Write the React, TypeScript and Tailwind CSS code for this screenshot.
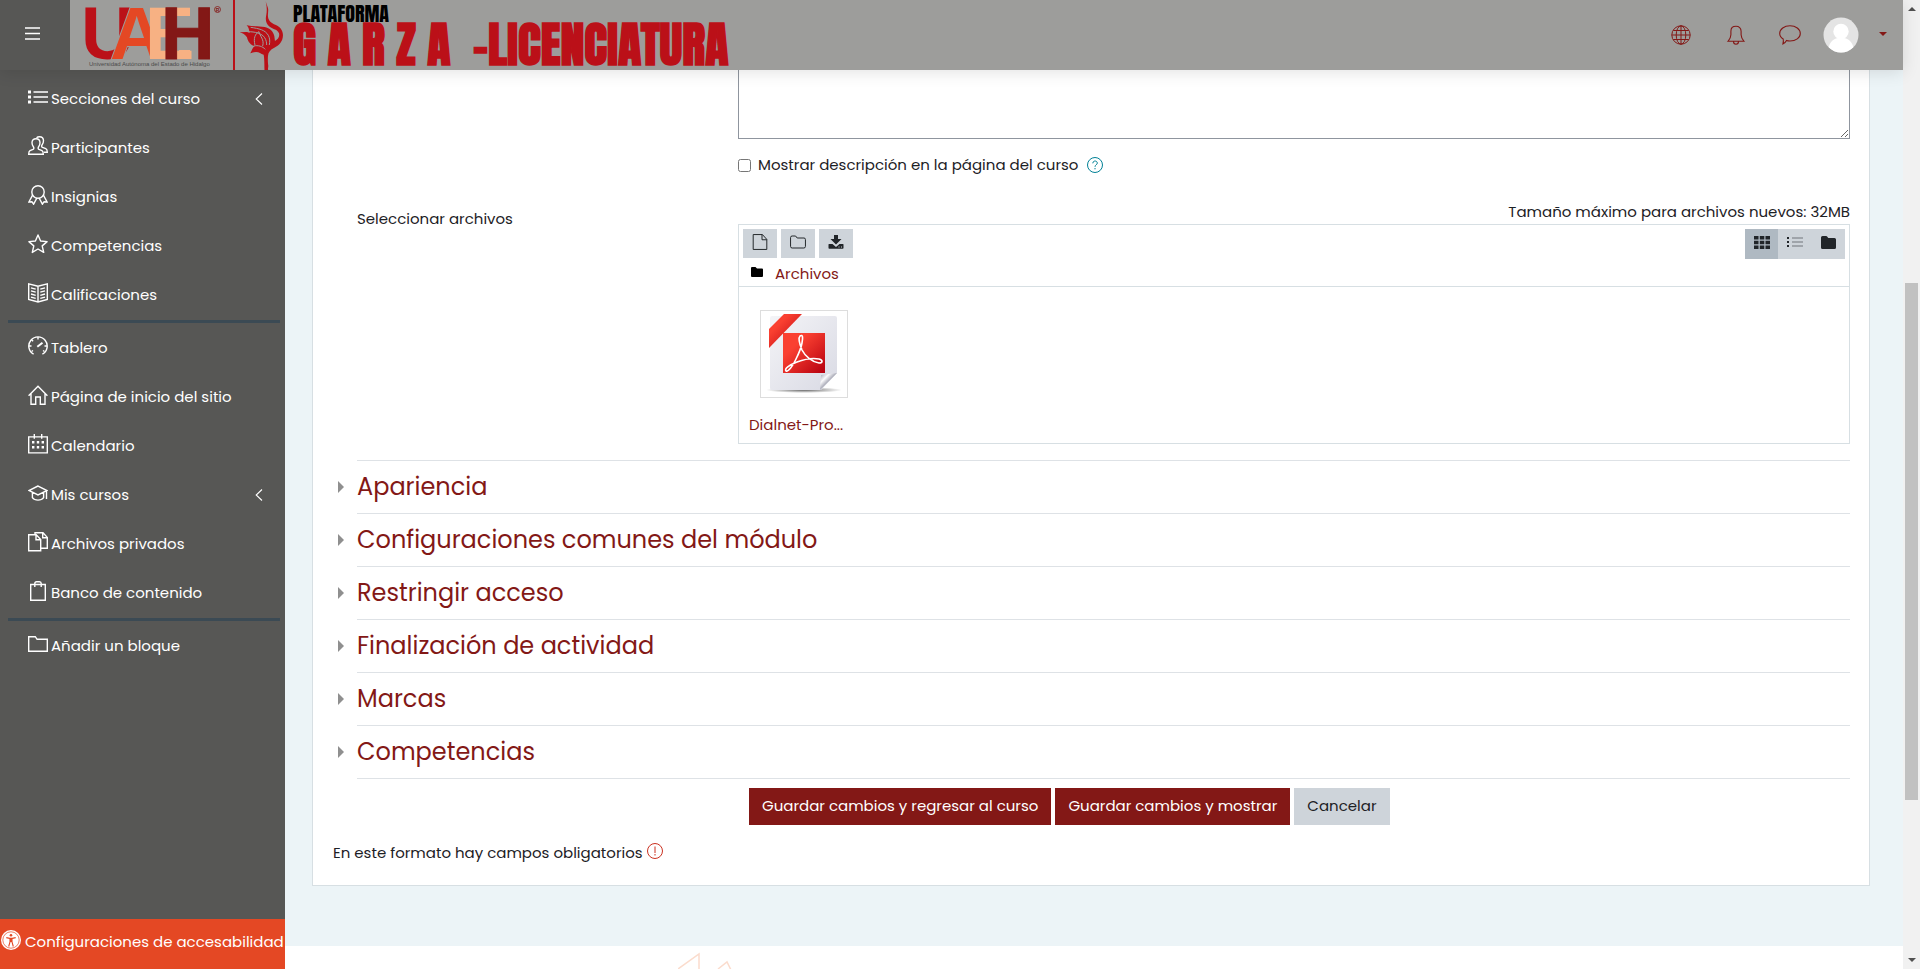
import type { ReactNode } from "react";

type IconProps = { children: ReactNode; size?: string; weight?: number };

function Line({ children, size = "h-5 w-5", weight = 1.4 }: IconProps) {
  return (
    <svg
      viewBox="0 0 20 20"
      className={`${size} shrink-0`}
      fill="none"
      stroke="currentColor"
      strokeWidth={weight}
      aria-hidden="true"
    >
      {children}
    </svg>
  );
}

const icons = {
  list: (
    <Line>
      <path d="M5.5 5H20M5.5 10H20M5.5 15H20" />
      <path d="M0 5h3M0 10h3M0 15h3" strokeWidth={2.8} />
    </Line>
  ),
  users: (
    <Line>
      <path d="M8 2.7c2.500 0 4 1.600 4 4.100 0 2-.7 3.200-1.500 4.200-.6.8-.5 1.900.5 2.400l3 1.300c1 .5 1.300 1.300 1.300 3.600H.7c0-2.300.3-3.100 1.300-3.600l3-1.300c1-.5 1.100-1.600.5-2.400C4.700 10 4 8.800 4 6.800c0-2.500 1.500-4.100 4-4.100z" />
      <path d="M8.500 1.700C9.300 1 10.200.7 11.500.7c2.500 0 4 1.600 4 4.100 0 2-.7 3.200-1.500 4.200-.6.800-.5 1.900.5 2.400l3.300 1.300c1.200.5 1.500 1.300 1.500 3.600H16" />
    </Line>
  ),
  badge: (
    <Line>
      <circle cx="10" cy="7" r="6.200" />
      <path d="M4.600 10.200L.9 17l3-.3 1.700 2.500 3.300-6.200M15.400 10.200l3.700 6.800-3-.3-1.700 2.500-3.300-6.200" />
    </Line>
  ),
  star: (
    <Line>
      <path d="M10 1l2.600 6 6.500.6-4.900 4.300 1.500 6.500-5.700-3.400-5.700 3.400 1.500-6.500L.9 7.600 7.400 7z" strokeLinejoin="round" />
    </Line>
  ),
  book: (
    <Line>
      <path d="M10 3.200L.7.900v15.600L10 19l9.300-2.500V.900zM10 3.200V19" />
      <path d="M3 4.800l4.700 1.300M3 7.900l4.700 1.300M3 11l4.700 1.300M3 14.100l4.700 1.300M17 4.800l-4.700 1.300M17 7.900l-4.700 1.300M17 11l-4.700 1.300M17 14.100l-4.700 1.300" />
    </Line>
  ),
  gauge: (
    <Line>
      <path d="M5.600 18.200a9.200 9.200 0 1 1 8.800 0" />
      <path d="M10 1v2.500M3.600 3.800l1.500 1.500M1 10h2.500M16.500 10H19M3.500 15.500l1.500-1M16.500 15.500l-1.500-1" />
      <path d="M9.300 10.700l5.200-4" strokeWidth={2} />
    </Line>
  ),
  home: (
    <Line>
      <path d="M.6 10.800L10 1.200l9.400 9.600M3 8.800v10.400h4.700V12h4.600v7.200H17V8.800" />
    </Line>
  ),
  calendar: (
    <Line>
      <path d="M.7 2.900h18.600v16H.7zM6.300 0v4.800M13.700 0v4.800" />
      <path d="M4 8.300h2.400M8.800 8.300h2.400M13.600 8.300H16M4 13.200h2.400M8.800 13.200h2.400M13.600 13.200H16" strokeWidth={2.500} />
    </Line>
  ),
  cap: (
    <Line>
      <path d="M10 3L.9 7.500 10 12l9.100-4.500zM4.400 9.600v5c1.200 1.700 3 2.500 5.600 2.500s4.400-.8 5.600-2.500v-5M18.500 7.700v8.300" />
    </Line>
  ),
  files: (
    <Line>
      <path d="M.7 2.700h7.500l4.500 4.800v11.300H.7zM8 2.700v5h4.700" />
      <path d="M7 2.700V.7h8l4.300 4.700v10.900h-6.600M14.700.7v5h4.600" />
    </Line>
  ),
  bag: (
    <Line>
      <path d="M2.700 3.500h14.600v15.800H2.700zM6.800 6V2.500c0-1 .7-1.800 1.700-1.800h3c1 0 1.700.8 1.700 1.800V6" />
    </Line>
  ),
  folder: (
    <Line>
      <path d="M.7 17.300V2.700h6.600l1.800 2.600h10.200v12z" />
    </Line>
  ),
};

const courseLinks = [
  { label: "Secciones del curso", icon: icons.list, expandable: true },
  { label: "Participantes", icon: icons.users },
  { label: "Insignias", icon: icons.badge },
  { label: "Competencias", icon: icons.star },
  { label: "Calificaciones", icon: icons.book },
];

const siteLinks = [
  { label: "Tablero", icon: icons.gauge },
  { label: "Página de inicio del sitio", icon: icons.home },
  { label: "Calendario", icon: icons.calendar },
  { label: "Mis cursos", icon: icons.cap, expandable: true },
  { label: "Archivos privados", icon: icons.files },
  { label: "Banco de contenido", icon: icons.bag },
];

const blockLinks = [{ label: "Añadir un bloque", icon: icons.folder }];

const sections = [
  "Apariencia",
  "Configuraciones comunes del módulo",
  "Restringir acceso",
  "Finalización de actividad",
  "Marcas",
  "Competencias",
];

type NavLink = { label: string; icon: ReactNode; expandable?: boolean };

function NavList({ links }: { links: NavLink[] }) {
  return (
    <ul>
      {links.map((link) => (
        <li key={link.label}>
          <a href="#" className="flex h-[49px] items-center pl-7 pr-5 text-white">
            <span className="mb-1.5">{link.icon}</span>
            <span className="ml-[3px] grow whitespace-nowrap">{link.label}</span>
            {link.expandable && (
              <svg viewBox="0 0 8 12" className="mb-0.5 mr-0.5 h-3 w-2" fill="none" stroke="currentColor" strokeWidth="1.100" aria-hidden="true">
                <path d="M7 .5L1.200 6 7 11.500" />
              </svg>
            )}
          </a>
        </li>
      ))}
    </ul>
  );
}

function Logo() {
  return (
    <svg viewBox="0 0 700 70" className="h-[70px] w-[700px]" role="img" aria-label="UAEH Plataforma Garza Licenciatura">
      <g fontFamily="'Liberation Sans',sans-serif" fontWeight="700" fontSize="74">
        <text x="11" y="59" fill="#bb1018">U</text>
        <text x="40" y="59" fill="#e44824" stroke="#9d9d9b" strokeWidth="2" paintOrder="stroke">A</text>
        <text x="75" y="59" fill="#f7b183">E</text>
        <path d="M109 8h11v8h-11zM109 50h11v9h-11z" fill="#f7b183" />
        <text x="91" y="59" fill="#831816" stroke="#831816">H</text>
      </g>
      <circle cx="147.500" cy="9.500" r="3" fill="none" stroke="#831816" strokeWidth=".8" />
      <text x="145.800" y="11.500" fontFamily="'Liberation Sans',sans-serif" fontWeight="700" fontSize="5" fill="#831816">R</text>
      <text x="19" y="66" fontFamily="'Liberation Sans',sans-serif" fontSize="6" fill="#4b4b4b">Universidad Autónoma del Estado de Hidalgo</text>
      <path d="M163 0h2v70h-2z" fill="#bb1018" />
      <g transform="translate(-70 0) scale(.3333)">
        <path
          fill="#bb1018"
          d="M797 4l7 20c2 8-1 17 0 26 2 14 12 20 22 24 14 5 23 17 23 31 0 20-12 31-26 38-12 6-18 13-19 25-1 13 0 21 1 30l-1 9 5 24h-25c6-4 7-8 10-13-1-9 0-43-3-54-9-2-14-9-24-8-7 1-11 2-16 4 5-8 6-17 13-21-11-3-20-13-23-27-5-8-13-13-22-15l19-1c5 0 8 1 11 3-2-13-4-18-9-23 18 4 37 2 54 5 15 3 26 12 29 27l2 15c9-5 15-13 12-23-4-13-18-12-28-20-12-10-13-22-10-36 2-11 2-23-1-36z"
        />
        <path
          fill="none"
          stroke="#9d9d9b"
          strokeWidth="3"
          d="M743 95c22 0 43 5 51 18 5 8 6 14 6 22M752 82c25 4 43 7 53 24 5 9 5 18 3 29M765 135c-5-20 0-33 12-40 2 13 17 24 11 43M761 138c13-3 27 1 35 10"
        />
      </g>
      <g fontFamily="'Anton','Impact','Bebas Neue','Liberation Sans',sans-serif">
        <text x="223" y="22" fontSize="20" fill="#000">PLATAFORMA</text>
        <g fontSize="48" fill="#bb1018" stroke="#bb1018" strokeWidth="1.500">
          <text x="223" y="65">G A R Z A</text>
          <text x="403" y="65">-LICENCIATURA</text>
        </g>
      </g>
    </svg>
  );
}

function PdfThumb() {
  return (
    <svg viewBox="0 0 80 80" className="h-20 w-20" aria-hidden="true">
      <defs>
        <linearGradient id="sheet" x1="0" y1="0" x2="1" y2="1">
          <stop offset="0" stopColor="#f4f4f7" />
          <stop offset="1" stopColor="#d9dae4" />
        </linearGradient>
        <linearGradient id="red" x1="0" y1="0" x2="1" y2="1">
          <stop offset=".3" stopColor="#fa4031" />
          <stop offset="1" stopColor="#b5000f" />
        </linearGradient>
        <linearGradient id="curl" x1="0" y1="0" x2="1" y2="1">
          <stop offset=".1" stopColor="#b9bac4" />
          <stop offset=".3" stopColor="#fafafc" />
          <stop offset=".5" stopColor="#a9aab6" />
        </linearGradient>
        <radialGradient id="shade">
          <stop offset="0" stopColor="#000" stopOpacity=".6" />
          <stop offset="1" stopColor="#000" stopOpacity="0" />
        </radialGradient>
      </defs>
      <ellipse cx="40" cy="76" rx="38" ry="3" fill="url(#shade)" />
      <path d="M8 2h63q2 0 2 2v55L57 76H8q-2 0-2-2V4q0-2 2-2z" fill="url(#sheet)" />
      <path d="M73 59L56 76l1-15z" fill="url(#curl)" />
      <path d="M20 0h18L5 34V15z" fill="url(#red)" />
      <path d="M19 19h42v40H19z" fill="url(#red)" />
      <path
        d="M36 22c3-2 3 2 2 7-1 6-3 10-6 16-3 7-8 13-10 12-2-2 3-6 11-9 8-3 17-4 22-3 4 1 4 4 0 4-7-1-14-7-17-13-2-5-4-12-2-14z"
        fill="none"
        stroke="#fff"
        strokeWidth="1.600"
      />
    </svg>
  );
}

function Header() {
  return (
    <header className="relative z-10 flex h-[70px] shrink-0 items-center bg-[#9d9d9b] shadow-[0_2px_16px_rgba(0,0,0,0.12)]">
      <button type="button" aria-label="Panel lateral" className="flex h-full w-[70px] shrink-0 items-center bg-[#575755] pb-1 pl-[25px] text-white">
        <svg viewBox="0 0 15 13" className="h-[13px] w-[15px]" stroke="currentColor" strokeWidth="1.400" aria-hidden="true">
          <path d="M0 1h15M0 6.500h15M0 12h15" />
        </svg>
      </button>
      <a href="#" className="block shrink-0">
        <Logo />
      </a>
      <nav className="ml-auto flex items-center pr-4 text-[#831816]">
        <button type="button" aria-label="Idioma" className="flex w-[55px] justify-center">
          <Line weight={1}>
            <circle cx="10" cy="10" r="9.200" />
            <ellipse cx="10" cy="10" rx="4.800" ry="9.200" />
            <path d="M10 .8v18.400M.8 10h18.400M2.300 5.500h15.400M2.300 14.500h15.400" />
          </Line>
        </button>
        <button type="button" aria-label="Notificaciones" className="flex w-[55px] justify-center">
          <Line weight={1.100}>
            <path d="M2 16.300h16c-1.700-2-2.900-4-2.900-6.500V6.200C15.100 3 13 1.300 10 1.300S4.900 3 4.900 6.200v3.600c0 2.500-1.200 4.500-2.900 6.500zM7.500 16.500c0 3.600 5 3.600 5 0" />
          </Line>
        </button>
        <button type="button" aria-label="Mensajes" className="flex w-[53px] justify-center">
          <svg viewBox="0 0 22 20" className="h-5 w-[22px]" fill="none" stroke="currentColor" strokeWidth="1.100" aria-hidden="true">
            <path d="M11 .8c5.700 0 10.300 3.300 10.300 7.700S16.700 16 11 16c-1.300 0-2.400-.1-3.500-.5-.8 1.500-2 3-3.600 3.500.5-1.600.7-3.200.3-5C2.100 12.700.7 10.800.7 8.500.7 4.100 5.300.8 11 .8z" />
          </svg>
        </button>
        <button type="button" aria-label="Menú de usuario" className="ml-[7px] flex items-center gap-5">
          <svg viewBox="0 0 36 36" className="h-9 w-9" aria-hidden="true">
            <clipPath id="avatar">
              <circle cx="18" cy="18" r="17.500" />
            </clipPath>
            <g clipPath="url(#avatar)">
              <path d="M0 0h36v36H0z" fill="#e4e4e4" />
              <circle cx="18" cy="14.500" r="7.700" fill="#fff" />
              <path d="M5 36c0-9 4-14 10-15h6c6 1 10 6 10 15z" fill="#fff" />
            </g>
          </svg>
          <svg viewBox="0 0 8 4" className="mb-0.5 h-1 w-2" fill="currentColor" aria-hidden="true">
            <path d="M0 0h8L4 4z" />
          </svg>
        </button>
      </nav>
    </header>
  );
}

function Sidebar() {
  return (
    <aside className="flex w-[285px] shrink-0 flex-col bg-[#575755] pt-[5px]">
      <NavList links={courseLinks} />
      <hr className="mb-px ml-2 mr-[5px] border-t-3 border-[#3b4a54]" />
      <NavList links={siteLinks} />
      <hr className="mb-px ml-2 mr-[5px] border-t-3 border-[#3b4a54]" />
      <NavList links={blockLinks} />
      <button type="button" className="mt-auto flex h-[50px] items-center gap-1 whitespace-nowrap bg-[#e44824] pl-px pb-1 text-white">
        <svg viewBox="0 0 20 20" className="mb-1 h-5 w-5 shrink-0" aria-hidden="true">
          <circle cx="10" cy="10" r="10" fill="#fff" />
          <circle cx="10" cy="10" r="8.200" fill="none" stroke="#e44824" strokeWidth=".7" />
          <circle cx="10" cy="5.200" r="1.300" fill="#e44824" />
          <path d="M5.300 7.600l3.400.8h2.600l3.400-.8M9 8.500v3.500l-1.300 4.500M11 8.500v3.500l1.300 4.500M10 8.500v3.500" fill="none" stroke="#e44824" strokeWidth="1.100" />
        </svg>
        Configuraciones de accesabilidad
      </button>
    </aside>
  );
}

function FileManager() {
  const tool = "flex h-[29px] w-[34px] items-center justify-center bg-[#ced4da] pb-1";
  return (
    <div className="border border-[#d7dfe3]">
      <div className="flex h-[62px] justify-between border-b border-[#d7dfe3] px-1 pt-1">
        <div>
          <div className="flex gap-1">
            <button type="button" aria-label="Agregar" className={tool}>
              <Line size="h-4 w-4" weight={1.200}>
                <path d="M1.500.7h11.500l5.500 6v12.600h-17zM12.500.7v6.500h6" />
              </Line>
            </button>
            <button type="button" aria-label="Crear una carpeta" className={tool}>
              <Line size="h-4 w-4" weight={1.200}>
                <path d="M.7 15.500v-11q0-2 2-2H7l2 2.500h8.500q1.800 0 1.800 2v8.500q0 2-2 2H2.700q-2 0-2-2z" />
              </Line>
            </button>
            <button type="button" aria-label="Descargar todos los archivos" className={tool}>
              <svg viewBox="0 0 16 16" className="h-4 w-4" fill="#212529" aria-hidden="true">
                <path d="M6 1h4v4h3.500L8 10.500 2.500 5H6zM1 10h3.500L8 13l3.500-3H15q.5 0 .5.500V14q0 .800-.8.800H1.300q-.8 0-.8-.8v-3.500Q.5 10 1 10z" />
                <path d="M10.500 12.500h1v1h-1zM13 12.500h1v1h-1z" fill="#ced4da" />
              </svg>
            </button>
          </div>
          <div className="flex h-8 items-center pl-2">
            <svg viewBox="0 0 12 10" className="mb-1 h-2.5 w-3" aria-hidden="true">
              <path d="M1 0h3.500L6 1.500h5q1 0 1 1V9q0 1-1 1H1Q0 10 0 9V1q0-1 1-1z" />
            </svg>
            <a href="#" className="ml-3 text-[#831816]">Archivos</a>
          </div>
        </div>
        <div className="flex">
          <button type="button" aria-label="Mostrar iconos" className="flex h-[30px] w-[33px] items-center justify-center bg-[#afb9c2] pb-1">
            <svg viewBox="0 0 16 13" className="h-[13px] w-4" fill="#212529" aria-hidden="true">
              <path d="M0 0h4.500v3.500H0zM5.800 0h4.500v3.500H5.800zM11.500 0H16v3.500h-4.500zM0 4.800h4.500v3.500H0zM5.800 4.800h4.500v3.500H5.800zM11.500 4.800H16v3.500h-4.500zM0 9.500h4.500V13H0zM5.800 9.500h4.500V13H5.800zM11.500 9.500H16V13h-4.500z" />
            </svg>
          </button>
          <button type="button" aria-label="Mostrar lista" className="flex h-[30px] w-[33px] items-center justify-center bg-[#ced4da] pb-1">
            <svg viewBox="0 0 16 10" className="h-2.5 w-4" aria-hidden="true">
              <path d="M0 0h2v2H0zM0 4h2v2H0zM0 8h2v2H0z" fill="#212529" />
              <path d="M5 0h11v2H5zM5 4h11v2H5zM5 8h11v2H5z" fill="#9fa4aa" />
            </svg>
          </button>
          <button type="button" aria-label="Mostrar árbol" className="flex h-[30px] w-[34px] items-center justify-center bg-[#ced4da] pb-1">
            <svg viewBox="0 0 15 13" className="h-[13px] w-[15px]" fill="#212529" aria-hidden="true">
              <path d="M1.500 0H5q1 0 1.500 1l.8 1h6.200q1.500 0 1.500 1.500v8q0 1.500-1.500 1.500h-12Q0 13 0 11.500v-10Q0 0 1.500 0z" />
            </svg>
          </button>
        </div>
      </div>
      <a href="#" className="flex w-[110px] flex-col pb-1.5 pl-2.5 pt-[23px] text-[#831816]">
        <span className="mb-[15px] ml-[11px] flex h-[88px] w-[88px] shrink-0 items-center justify-center border border-[#dddddd]">
          <PdfThumb />
        </span>
        <span className="leading-6">Dialnet-Pro...</span>
      </a>
    </div>
  );
}

function ActivityForm() {
  return (
    <form className="mx-[27px] mr-[33px] border border-t-0 border-[#d7dfe3] bg-white px-5 pr-[19px] pb-5 text-[#1d2125]">
      <div className="grid grid-cols-[381px_1fr] pl-6">
        <div />
        <div>
          <textarea
            aria-label="Descripción"
            className="block h-[69px] w-full border border-t-0 border-[#8f959e] bg-white"
          />
          <div className="mt-3.5 flex h-6 items-center">
            <input id="show" type="checkbox" className="h-[13px] w-[13px]" />
            <label htmlFor="show" className="ml-[7px]">Mostrar descripción en la página del curso</label>
            <button type="button" aria-label="Ayuda" className="ml-[9px] text-[#008196]">
              <svg viewBox="0 0 16 16" className="h-4 w-4" fill="none" stroke="currentColor" aria-hidden="true">
                <circle cx="8" cy="8" r="7.500" />
                <path d="M5.800 6.300c0-3 4.500-3 4.500-.2 0 1.700-2.300 1.700-2.300 3.700M8 11v1.300" />
              </svg>
            </button>
          </div>
        </div>
        <div className="mt-[30px] leading-6">Seleccionar archivos</div>
        <div className="mt-[23px]">
          <p className="text-right leading-6">Tamaño máximo para archivos nuevos: 32MB</p>
          <FileManager />
        </div>
      </div>

      <div className="mt-4">
        {sections.map((title) => (
          <div key={title} className="flex items-center">
            <svg viewBox="0 0 6 12" className="ml-[5px] mr-[13px] h-3 w-1.5 shrink-0" fill="#8f8f8f" aria-hidden="true">
              <path d="M0 0l6 6-6 6z" />
            </svg>
            <h3 className="h-[53px] grow border-t border-[#dee2e6]">
              <a href="#" className="text-2xl leading-[52px] text-[#831816]">{title}</a>
            </h3>
          </div>
        ))}
      </div>
      <hr className="ml-6 border-[#dee2e6]" />

      <div className="mt-[9px] flex justify-start gap-1 pl-[416px]">
        <button type="submit" className="h-[37px] bg-[#831816] px-[13px] text-white">Guardar cambios y regresar al curso</button>
        <button type="submit" className="h-[37px] bg-[#831816] px-[13px] text-white">Guardar cambios y mostrar</button>
        <button type="button" className="h-[37px] bg-[#ced4da] px-[13px]">Cancelar</button>
      </div>

      <p className="mt-4 flex items-center gap-1 leading-6">
        En este formato hay campos obligatorios
        <svg viewBox="0 0 16 16" className="mb-1 h-4 w-4" fill="none" stroke="#ca3120" aria-hidden="true">
          <circle cx="8" cy="8" r="7.500" />
          <path d="M8 3.500v6.500M8 11v1.500" />
        </svg>
      </p>
    </form>
  );
}

function ScrollTrack() {
  return (
    <div aria-hidden="true" className="flex w-[17px] shrink-0 flex-col items-center justify-between bg-[#f1f1f1] py-[7px]">
      <svg viewBox="0 0 8 4" className="h-1 w-2" fill="#505050">
        <path d="M4 0l4 4H0z" />
      </svg>
      <div className="mt-[114px] h-[517px] w-[13px] bg-[#c1c1c1]" />
      <svg viewBox="0 0 8 4" className="h-1 w-2" fill="#505050">
        <path d="M0 0h8L4 4z" />
      </svg>
    </div>
  );
}

export default function App() {
  return (
    <div className="flex h-screen overflow-hidden bg-white font-['Poppins','Inter',sans-serif] text-[15px]">
      <div className="flex min-w-0 grow flex-col">
        <Header />
        <div className="flex min-h-0 grow">
          <Sidebar />
          <div className="min-w-0 grow overflow-hidden">
            <main className="bg-[#ecf4f7] pb-[60px]">
              <ActivityForm />
            </main>
            <footer className="pl-[393px] pt-1.5">
              <svg viewBox="0 0 60 20" className="h-5 w-[60px]" fill="none" stroke="#fbdccd" strokeWidth="1.500" aria-hidden="true">
                <path d="M0 17L21 2v18M40 17l9-7 4 8" />
              </svg>
            </footer>
          </div>
        </div>
      </div>
      <ScrollTrack />
    </div>
  );
}
